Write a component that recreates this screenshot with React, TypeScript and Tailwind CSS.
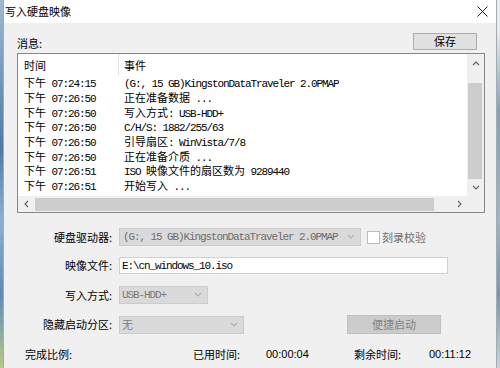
import React from "react";

const CJK = "font-['Microsoft_YaHei','Noto_Sans_CJK_SC',sans-serif]";

function Sim({ t, className = "" }: { t: string; className?: string }) {
  const parts = t.split(/([\x00-\x7f]+)/).filter((p) => p.length > 0);
  return (
    <span className={"whitespace-pre " + className}>
      {parts.map((p, i) =>
        /^[\x00-\x7f]+$/.test(p) ? (
          <span key={i} className="font-['Liberation_Mono',monospace] tracking-[-1.1px]">
            {p}
          </span>
        ) : (
          <span key={i} className="font-['Noto_Sans_CJK_SC',sans-serif]">
            {p}
          </span>
        )
      )}
    </span>
  );
}

function Chev({ dir, color = "#606060", size = 8 }: { dir: "up" | "down" | "left" | "right"; color?: string; size?: number }) {
  const pts: Record<string, string> = {
    up: "1,6 4,3 7,6",
    down: "1,2 4,5 7,2",
    left: "5,1 2,4 5,7",
    right: "3,1 6,4 3,7",
  };
  return (
    <svg width={size} height={size} viewBox="0 0 8 8">
      <polyline points={pts[dir]} fill="none" stroke={color} strokeWidth="1.1" />
    </svg>
  );
}

const rows: [string, string][] = [
  ["下午 07:24:15", "(G:, 15 GB)KingstonDataTraveler 2.0PMAP"],
  ["下午 07:26:50", "正在准备数据 ..."],
  ["下午 07:26:50", "写入方式: USB-HDD+"],
  ["下午 07:26:50", "C/H/S: 1882/255/63"],
  ["下午 07:26:50", "引导扇区: WinVista/7/8"],
  ["下午 07:26:50", "正在准备介质 ..."],
  ["下午 07:26:51", "ISO 映像文件的扇区数为 9289440"],
  ["下午 07:26:51", "开始写入 ..."],
];

function Label({ children }: { children: React.ReactNode }) {
  return (
    <div className={`w-[95px] shrink-0 text-right text-[11px] text-black mr-[7px] ${CJK}`}>{children}</div>
  );
}

export default function App() {
  return (
    <div className="w-[500px] h-[368px] flex overflow-hidden bg-[#7fa3c6]">
      <div className="w-[3px] h-full bg-[linear-gradient(180deg,#9fb9d3_0%,#4f7aa6_40%,#8fb0cf_60%,#5f8ab5_80%,#b7c98a_100%)]" />
      <div className="w-[494px] h-full flex flex-col bg-[#f0f0f0] border-x border-[#a9a9a9]">
        {/* title bar */}
        <div className="h-[23px] shrink-0 bg-white flex items-center justify-between pl-[1px] pr-[8px]">
          <span className={`text-[11px] text-black ${CJK}`}>写入硬盘映像</span>
          <svg width="11" height="11" viewBox="0 0 11 11">
            <path d="M0.5 0.5 L10.5 10.5 M10.5 0.5 L0.5 10.5" stroke="#222" strokeWidth="1" />
          </svg>
        </div>

        <div className="flex flex-col pl-[13px] pr-[11px] pt-[10px]">
          <div className="h-[17px] flex items-end justify-between">
            <span className={`text-[11px] leading-[14px] text-black ${CJK}`}>消息:</span>
            <button className={`w-[64px] h-[17px] mr-[8px] bg-[#e1e1e1] border border-[#adadad] text-[11px] leading-[15px] text-black ${CJK}`}>
              保存
            </button>
          </div>

          {/* list */}
          <div className="mt-[3px] h-[160px] border border-[#828790] bg-white flex flex-col">
            <div className="h-[142px] flex">
              <div className="flex-1 flex flex-col text-[11px] text-black overflow-hidden">
                <div className="h-[22px] shrink-0 flex items-center relative pt-[1px]">
                  <span className={`pl-[6px] w-[100px] ${CJK}`}>时间</span>
                  <span className="absolute left-[100px] top-0 h-[21px] w-px bg-[#e5e5e5]" />
                  <span className={`pl-[6px] ${CJK}`}>事件</span>
                </div>
                {rows.map(([a, b], i) => (
                  <div key={i} className="h-[14.7px] shrink-0 flex items-center leading-[14px]">
                    <div className="pl-[6px] w-[106px] shrink-0">
                      <Sim t={a} />
                    </div>
                    <Sim t={b} />
                  </div>
                ))}
              </div>
              <div className="w-[17px] shrink-0 bg-[#f0f0f0] flex flex-col">
                <div className="h-[17px] flex items-center justify-center">
                  <Chev dir="up" />
                </div>
                <div className="flex-1">
                  <div className="mt-[12px] h-[96px] ml-[1px] mr-[2px] bg-[#cdcdcd]" />
                </div>
                <div className="h-[17px] flex items-center justify-center">
                  <Chev dir="down" />
                </div>
              </div>
            </div>
            <div className="flex-1 flex bg-[#f0f0f0]">
              <div className="w-[17px] flex items-center justify-center">
                <Chev dir="left" />
              </div>
              <div className="flex-1 flex items-center">
                <div className="h-[13px] w-[399px] bg-[#cdcdcd]" />
              </div>
              <div className="w-[17px] flex items-center justify-center">
                <Chev dir="right" />
              </div>
              <div className="w-[17px]" />
            </div>
          </div>

          {/* form */}
          <div className="mt-[15px] h-[18px] flex items-center">
            <Label>硬盘驱动器:</Label>
            <div className="w-[242px] h-[18px] bg-[#dadada] border border-[#cccccc] flex items-center justify-between pl-[3px] pr-[5px] text-[11px] text-[#6d6d6d]">
              <Sim t="(G:, 15 GB)KingstonDataTraveler 2.0PMAP" />
              <Chev dir="down" color="#b0b0b0" />
            </div>
            <div className="ml-[6px] w-[13px] h-[13px] bg-white border border-[#bcbcbc]" />
            <span className={`ml-[2px] text-[11px] text-[#6d6d6d] ${CJK}`}>刻录校验</span>
          </div>

          <div className="mt-[11px] h-[17px] flex items-center">
            <Label>映像文件:</Label>
            <div className="w-[329px] h-[17px] bg-white border border-[#d0d0d0] flex items-center pl-[2px] text-[11px] text-black">
              <Sim t="E:\cn_windows_10.iso" />
            </div>
          </div>

          <div className="mt-[12px] h-[18px] flex items-center">
            <Label>写入方式:</Label>
            <div className="w-[89px] h-[18px] bg-[#dadada] border border-[#cccccc] flex items-center justify-between pl-[2px] pr-[5px] text-[11px] text-[#7a7a7a]">
              <Sim t="USB-HDD+" />
              <Chev dir="down" color="#b0b0b0" />
            </div>
          </div>

          <div className="mt-[11px] h-[19px] flex items-center">
            <Label>隐藏启动分区:</Label>
            <div className="w-[125px] h-[18px] bg-[#dadada] border border-[#cccccc] flex items-center justify-between pl-[2px] pr-[5px] text-[11px] text-[#7a7a7a]">
              <span className={CJK}>无</span>
              <Chev dir="down" color="#b0b0b0" />
            </div>
            <div className={`ml-[103px] w-[94px] h-[19px] bg-[#cccccc] border border-[#bfbfbf] flex items-center justify-center text-[11px] text-[#838383] ${CJK}`}>
              便捷启动
            </div>
          </div>

          <div className="mt-[12px] h-[16px] flex items-center pl-[8px] text-[11px] text-black">
            <span className={`w-[168px] ${CJK}`}>完成比例:</span>
            <span className={`w-[73px] ${CJK}`}>已用时间:</span>
            <span className="w-[88px] font-['Liberation_Sans',sans-serif]">00:00:04</span>
            <span className={`w-[75px] ${CJK}`}>剩余时间:</span>
            <span className="font-['Liberation_Sans',sans-serif]">00:11:12</span>
          </div>
        </div>
      </div>
      <div className="flex-1 h-full bg-[linear-gradient(180deg,#e9eef3_0%,#e9eef3_8%,#7da3c6_30%,#9ab6cf_60%,#6f97be_80%,#c7d5e2_100%)]" />
    </div>
  );
}
